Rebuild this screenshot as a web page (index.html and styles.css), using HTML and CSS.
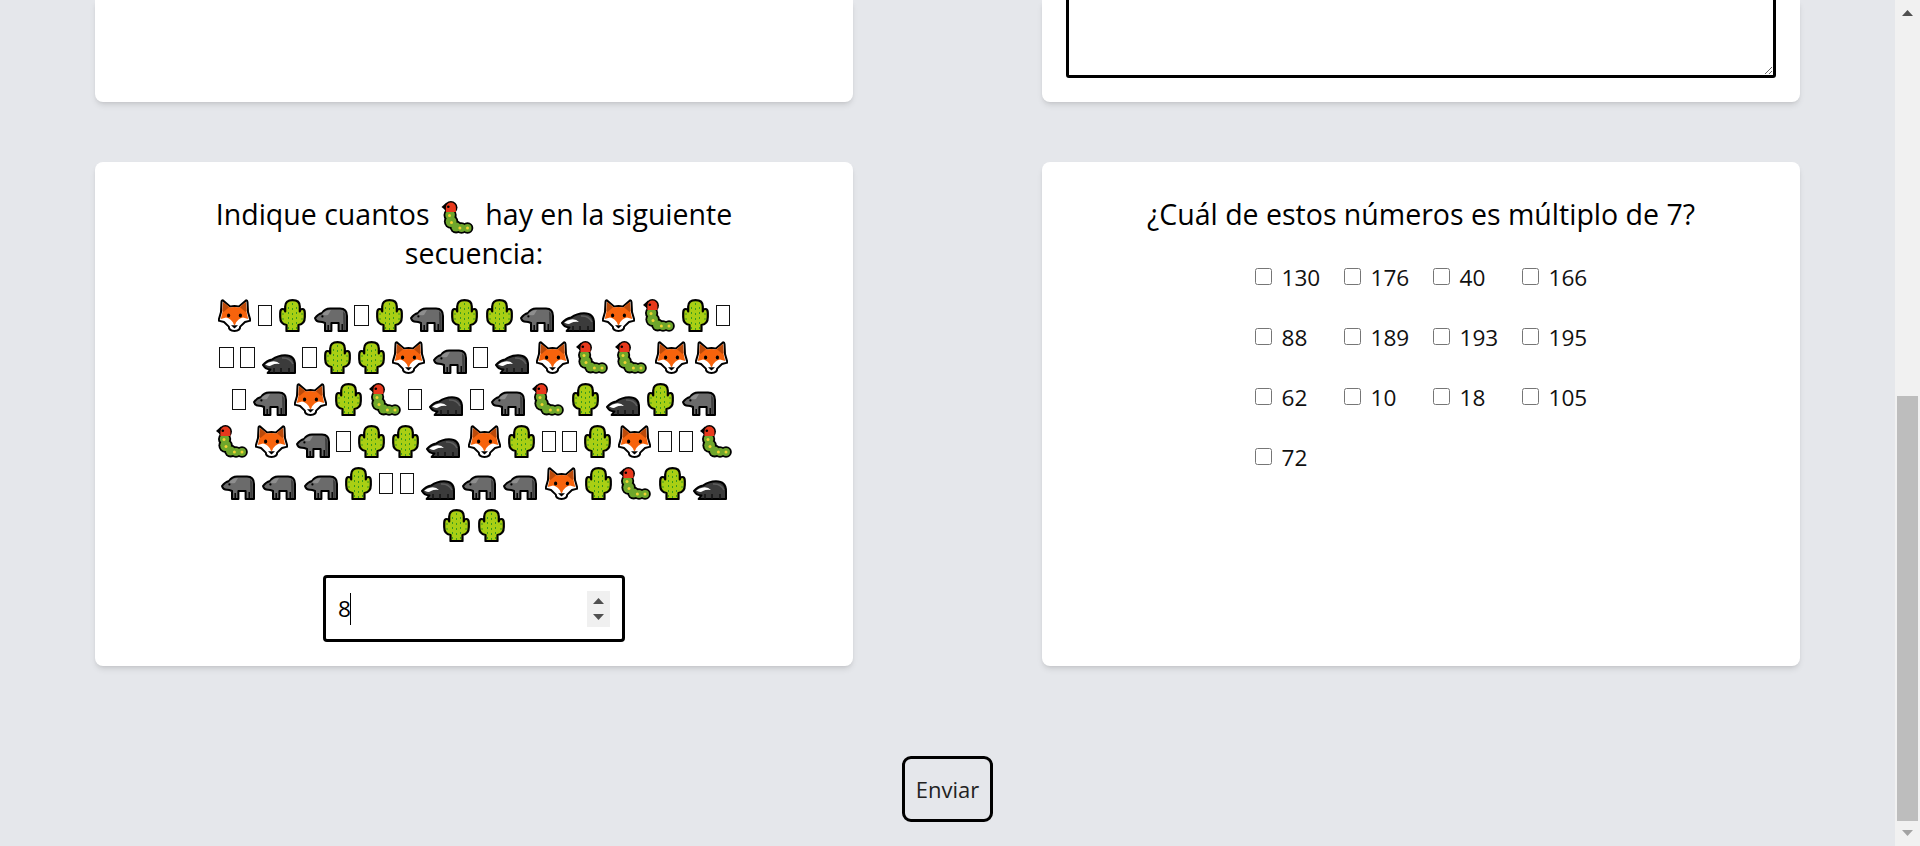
FILE: index.html
```html
<!DOCTYPE html>
<html lang="es">
<head>
<meta charset="utf-8">
<title>Formulario</title>
<link rel="stylesheet" href="styles.css">
</head>
<body>
<svg class="defs" aria-hidden="true">
  <symbol id="fox" viewBox="0 0 33 33">
    <path d="M4.8 1.2 L12 7.6 Q16.5 6.4 21 7.6 L28.2 1.2 Q29.4 1.2 29.5 3 L30 13 L32.5 21.6 L27 23 L22.2 27.6 Q22.2 32 16.5 32 Q10.8 32 10.8 27.6 L6 23 L.5 21.6 L3 13 L3.5 3 Q3.6 1.2 4.8 1.2Z" fill="#fff" stroke="#000" stroke-width="2" stroke-linejoin="round"/>
    <path d="M5 3 L12 8.6 Q16.5 7.6 21 8.6 L28 3 L28.6 13 L30.2 20 L25 18.6 Q20 19.5 16.5 26 Q13 19.5 8 18.6 L2.8 20 L4.4 13Z" fill="#f7630c"/>
    <path d="M5 3 L11 8.2 L5.5 13 L4.4 12Z M28 3 L22 8.2 L27.5 13 L28.6 12Z" fill="#bb4a0a"/>
    <ellipse cx="10.6" cy="16.6" rx="1.6" ry="2" fill="#000"/><ellipse cx="22.4" cy="16.6" rx="1.6" ry="2" fill="#000"/>
    <path d="M13 26.2 H20 L16.5 29.6Z" fill="#000"/>
    <path d="M15 24.4 H18 L16.5 26.2Z" fill="#f7630c"/>
  </symbol>
  <symbol id="cactus" viewBox="0 0 27 33">
    <path d="M7.5 32 V26 Q1.2 25 1.2 18 V14 Q1.2 10 3.6 10 Q6 10 6.2 12.5 V7.5 Q6.2 1.2 13.5 1.2 Q20.8 1.2 20.8 7.5 V12.5 Q21 10 23.4 10 Q25.8 10 25.8 14 V18 Q25.8 25 19.5 26 V32Z" fill="#a9cf14" stroke="#000" stroke-width="2.2" stroke-linejoin="round"/>
    <path d="M9.5 8 V30 M13.5 4 V31 M17.5 8 V30 M4 14 V21 M23 14 V21" fill="none" stroke="#3a9a1e" stroke-width="1" stroke-dasharray="2 3"/>
  </symbol>
  <symbol id="boar" viewBox="0 0 34 25">
    <path d="M1 11 Q4 7 8 6 Q11 1.4 16 1.4 H26 Q33 1.4 33 9 V24 H24.6 V16 H17.4 V24 H11 V16 Q8 14.8 6 14.8 Q2 14.8 1 11Z" fill="#6b6b6b" stroke="#000" stroke-width="2" stroke-linejoin="round"/>
    <path d="M8 7 Q12 3 17 3 L14 8 Q10 9 8 7Z" fill="#8e8e8e"/>
    <path d="M29 4 Q31.6 6 31.6 10 V23 H29.4Z" fill="#3f3f3f"/>
    <path d="M28.2 17 V24 M14.2 18 V24" stroke="#000" stroke-width="1.4"/>
    <circle cx="8.4" cy="9.4" r="1.1" fill="#000"/>
  </symbol>
  <symbol id="badger" viewBox="0 0 34 20">
    <path d="M1 11 Q4.6 6.6 10 5.6 Q16 1.2 23 1.2 Q33 1.2 33 11 V19 H5.6 L8.4 15.4 Q3.6 15.4 1 11Z" fill="#3b3b3b" stroke="#000" stroke-width="2" stroke-linejoin="round"/>
    <path d="M3.2 10.6 Q6.4 8 10 7.4 Q15 6.6 18 10 Q13 9.4 10 11 Q7 13 3.2 10.6Z" fill="#fff"/>
    <path d="M20 4 Q28 3.6 31 10" fill="none" stroke="#5e5e5e" stroke-width="1.6"/>
    <path d="M12 19 V14 M19 19 V14 M27 19 V14" fill="none" stroke="#111" stroke-width="1.4"/>
  </symbol>
  <symbol id="worm" viewBox="0 0 32 33">
    <g fill="#000">
      <circle cx="8.6" cy="14" r="6.6"/><circle cx="9.6" cy="20.6" r="7.2"/><circle cx="14.6" cy="26" r="6.4"/><circle cx="20" cy="27" r="5.8"/><circle cx="26" cy="27" r="5.8"/>
      <path d="M0 6 L5 1.6 V10Z"/><circle cx="9.4" cy="6.6" r="6.6"/>
    </g>
    <g fill="#6ea62c">
      <circle cx="8.6" cy="14" r="4.8"/><circle cx="9.6" cy="20.6" r="5.4"/><circle cx="14.6" cy="26" r="4.6"/><circle cx="20" cy="27" r="4"/><circle cx="26" cy="27" r="4"/>
    </g>
    <path d="M4.4 6.6 A5 5 0 0 1 14.4 6.6 V11 H4.4Z" fill="#e8391c"/>
    <circle cx="6.8" cy="5.8" r="1.3" fill="#000"/>
    <circle cx="8" cy="14.6" r="1.5" fill="#f2d331"/><circle cx="10" cy="21.6" r="1.5" fill="#f2d331"/>
    <circle cx="18.4" cy="27" r="1.5" fill="#f2d331"/><circle cx="26" cy="27" r="1.5" fill="#f2d331"/>
  </symbol>
</svg>

<div class="page">
  <main class="content">
    <section class="grid">
      <div class="card card-cut"></div>
      <div class="card card-cut card-text"><textarea class="area"></textarea></div>

      <form class="card card-q">
        <p class="title">Indique cuantos <svg class="e title-e"><use href="#worm"/></svg> hay en la siguiente secuencia:</p>
        <div class="seq">
          <svg class="e fox"><use href="#fox"/></svg><span class="tofu"></span><svg class="e cactus"><use href="#cactus"/></svg><svg class="e boar"><use href="#boar"/></svg><span class="tofu"></span><svg class="e cactus"><use href="#cactus"/></svg><svg class="e boar"><use href="#boar"/></svg><svg class="e cactus"><use href="#cactus"/></svg><svg class="e cactus"><use href="#cactus"/></svg><svg class="e boar"><use href="#boar"/></svg><svg class="e badger"><use href="#badger"/></svg><svg class="e fox"><use href="#fox"/></svg><svg class="e worm"><use href="#worm"/></svg><svg class="e cactus"><use href="#cactus"/></svg><span class="tofu"></span>
          <span class="tofu"></span><span class="tofu"></span><svg class="e badger"><use href="#badger"/></svg><span class="tofu"></span><svg class="e cactus"><use href="#cactus"/></svg><svg class="e cactus"><use href="#cactus"/></svg><svg class="e fox"><use href="#fox"/></svg><svg class="e boar"><use href="#boar"/></svg><span class="tofu"></span><svg class="e badger"><use href="#badger"/></svg><svg class="e fox"><use href="#fox"/></svg><svg class="e worm"><use href="#worm"/></svg><svg class="e worm"><use href="#worm"/></svg><svg class="e fox"><use href="#fox"/></svg><svg class="e fox"><use href="#fox"/></svg>
          <span class="tofu"></span><svg class="e boar"><use href="#boar"/></svg><svg class="e fox"><use href="#fox"/></svg><svg class="e cactus"><use href="#cactus"/></svg><svg class="e worm"><use href="#worm"/></svg><span class="tofu"></span><svg class="e badger"><use href="#badger"/></svg><span class="tofu"></span><svg class="e boar"><use href="#boar"/></svg><svg class="e worm"><use href="#worm"/></svg><svg class="e cactus"><use href="#cactus"/></svg><svg class="e badger"><use href="#badger"/></svg><svg class="e cactus"><use href="#cactus"/></svg><svg class="e boar"><use href="#boar"/></svg>
          <svg class="e worm"><use href="#worm"/></svg><svg class="e fox"><use href="#fox"/></svg><svg class="e boar"><use href="#boar"/></svg><span class="tofu"></span><svg class="e cactus"><use href="#cactus"/></svg><svg class="e cactus"><use href="#cactus"/></svg><svg class="e badger"><use href="#badger"/></svg><svg class="e fox"><use href="#fox"/></svg><svg class="e cactus"><use href="#cactus"/></svg><span class="tofu"></span><span class="tofu"></span><svg class="e cactus"><use href="#cactus"/></svg><svg class="e fox"><use href="#fox"/></svg><span class="tofu"></span><span class="tofu"></span><svg class="e worm"><use href="#worm"/></svg>
          <svg class="e boar"><use href="#boar"/></svg><svg class="e boar"><use href="#boar"/></svg><svg class="e boar"><use href="#boar"/></svg><svg class="e cactus"><use href="#cactus"/></svg><span class="tofu"></span><span class="tofu"></span><svg class="e badger"><use href="#badger"/></svg><svg class="e boar"><use href="#boar"/></svg><svg class="e boar"><use href="#boar"/></svg><svg class="e fox"><use href="#fox"/></svg><svg class="e cactus"><use href="#cactus"/></svg><svg class="e worm"><use href="#worm"/></svg><svg class="e cactus"><use href="#cactus"/></svg><svg class="e badger"><use href="#badger"/></svg>
          <svg class="e cactus"><use href="#cactus"/></svg><svg class="e cactus"><use href="#cactus"/></svg>
        </div>
        <div class="number">
          <input class="number-input" type="text" value="8" aria-label="Cantidad">
          <span class="caret"></span>
          <span class="spin">
            <svg class="spin-a" viewBox="0 0 11 6"><path d="M5.5 0 L11 6 H0Z"/></svg>
            <svg class="spin-a" viewBox="0 0 11 6"><path d="M0 0 H11 L5.5 6Z"/></svg>
          </span>
        </div>
      </form>

      <form class="card card-q">
        <p class="title">¿Cuál de estos números es múltiplo de 7?</p>
        <div class="checks">
          <label class="check"><input type="checkbox">130</label>
          <label class="check"><input type="checkbox">176</label>
          <label class="check"><input type="checkbox">40</label>
          <label class="check"><input type="checkbox">166</label>
          <label class="check"><input type="checkbox">88</label>
          <label class="check"><input type="checkbox">189</label>
          <label class="check"><input type="checkbox">193</label>
          <label class="check"><input type="checkbox">195</label>
          <label class="check"><input type="checkbox">62</label>
          <label class="check"><input type="checkbox">10</label>
          <label class="check"><input type="checkbox">18</label>
          <label class="check"><input type="checkbox">105</label>
          <label class="check"><input type="checkbox">72</label>
        </div>
      </form>
    </section>
    <div class="actions"><button class="send" type="button">Enviar</button></div>
  </main>
  <aside class="scrollbar" aria-hidden="true">
    <svg class="sb-arrow sb-up" viewBox="0 0 11 6"><path d="M5.5 0 L11 6 H0Z"/></svg>
    <div class="sb-thumb"></div>
    <svg class="sb-arrow sb-down" viewBox="0 0 11 6"><path d="M0 0 H11 L5.5 6Z"/></svg>
  </aside>
</div>
</body>
</html>
```

FILE: styles.css
```css
* { box-sizing: border-box; }
html, body { margin: 0; height: 846px; overflow: hidden; }
body {
  background: #e5e7eb;
  color: #000;
  font-family: "Open Sans", "Noto Sans", sans-serif;
}
.defs { position: absolute; width: 0; height: 0; }
.page { display: flex; height: 846px; }
.content { flex: 1; min-width: 0; padding: 0 95px; }

.grid {
  display: grid;
  grid-template-columns: 758px 758px;
  grid-template-rows: 102px 504px;
  column-gap: 189px;
  row-gap: 60px;
}
.card {
  background: #fff;
  border-radius: 8px;
  box-shadow: 0 4px 6px -1px rgba(0,0,0,.1), 0 2px 4px -2px rgba(0,0,0,.1);
}
.card-cut { border-radius: 0 0 8px 8px; }
.card-text { padding: 0 24px; overflow: hidden; }
.area {
  display: block;
  width: 710px;
  height: 88px;
  margin-top: -10px;
  border: 3px solid #000;
  border-radius: 3px;
  background: #fff;
}

.card-q {
  display: flex;
  flex-direction: column;
  align-items: center;
  padding-top: 33px;
}
.title {
  margin: 0;
  width: 540px;
  font-size: 28.5px;
  line-height: 39px;
  text-align: center;
}
.card-q:last-child .title { width: 600px; }

.e { display: block; height: 33px; flex: none; }
.title-e {
  display: inline-block;
  width: 33px;
  height: 33px;
  margin: -6px 4px;
  vertical-align: middle;
}
.fox { width: 33px; }
.cactus { width: 27px; }
.boar { width: 34px; height: 25px; align-self: flex-end; }
.badger { width: 34px; height: 20px; align-self: flex-end; }
.worm { width: 32px; }
.tofu {
  flex: none;
  width: 14.5px;
  height: 21px;
  margin: 0 -.5px;
  border: 1.5px solid #111;
}
.seq {
  display: flex;
  flex-wrap: wrap;
  justify-content: center;
  align-items: center;
  gap: 9px 7.3px;
  width: 520px;
  margin-top: 26px;
}

.number { position: relative; width: 302px; height: 67px; margin-top: 33px; }
.number-input {
  display: block;
  width: 100%;
  height: 100%;
  padding: 0 12px;
  border: 3px solid #000;
  border-radius: 4px;
  background: #fff;
  color: #000;
  font: 22.6px "Open Sans", sans-serif;
  outline: none;
}
.caret {
  position: absolute;
  left: 27px;
  top: 18px;
  width: 1px;
  height: 32px;
  background: #000;
}
.spin {
  position: absolute;
  right: 15px;
  top: 16px;
  display: flex;
  flex-direction: column;
  align-items: center;
  justify-content: center;
  gap: 10px;
  width: 23px;
  height: 36px;
  background: #f0f0f0;
}
.spin-a { width: 11px; height: 6px; fill: #505050; }

.checks {
  display: grid;
  grid-template-columns: repeat(4, 66px);
  grid-auto-rows: 36px;
  row-gap: 24px;
  column-gap: 23px;
  margin-top: 25px;
}
.check {
  display: flex;
  align-items: center;
  font-size: 22.6px;
  white-space: nowrap;
  color: #111;
}
.check input { width: 17px; height: 17px; margin: 0 10px 2px 0; flex: none; }

.actions { display: flex; justify-content: center; padding-top: 90px; }
.send {
  width: 91px;
  height: 66px;
  padding: 0;
  border: 3.5px solid #000;
  border-radius: 9px;
  background: transparent;
  color: #222;
  font: 22px "Open Sans", sans-serif;
}

.scrollbar {
  flex: none;
  width: 25px;
  height: 846px;
  display: flex;
  flex-direction: column;
  align-items: center;
  background: #f1f1f1;
}
.sb-arrow { width: 11px; height: 6px; flex: none; }
.sb-up { fill: #505050; margin-top: 10px; }
.sb-thumb { width: 21px; height: 425px; margin-top: auto; background: #bdbdbd; }
.sb-down { fill: #a3a3a3; margin: 9px 0 10px; }
```
